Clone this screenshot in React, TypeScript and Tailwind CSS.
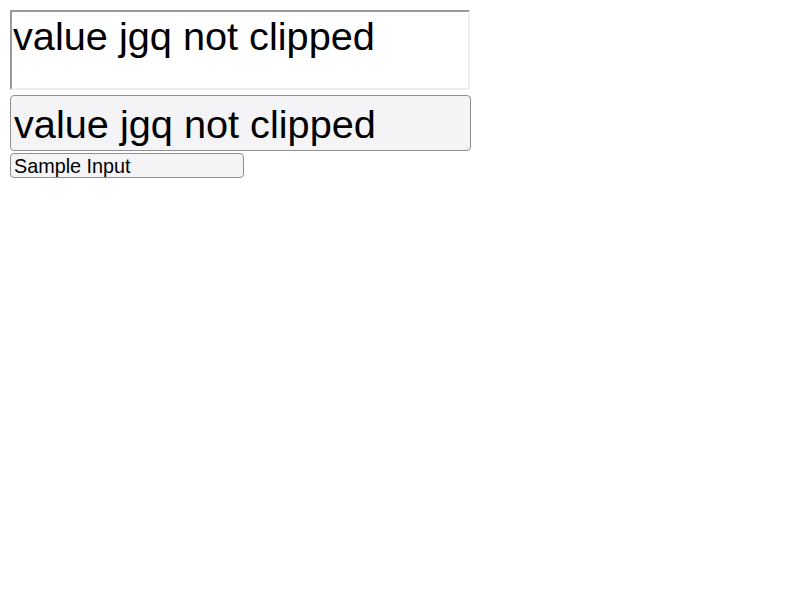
export default function App() {
  return (
    <div className="p-[10px] flex flex-col items-start font-['Liberation_Sans',Arial,sans-serif] text-black">
      <textarea
        readOnly
        defaultValue="value jgq not clipped"
        className="w-[460px] h-[80px] resize-none border-2 border-t-[#9a9a9a] border-l-[#9a9a9a] border-b-[#eeeeee] border-r-[#eeeeee] bg-white px-[1px] pt-[1px] pb-0 text-[39.7px] leading-[46px] outline-none overflow-hidden"
      />
      <input
        readOnly
        defaultValue="value jgq not clipped"
        className="mt-[5px] w-[461px] h-[56px] rounded-[4px] border border-[#8f8f8f] bg-[#f4f4f6] pl-[3px] pr-[2px] pt-[3px] pb-0 text-[39.7px] leading-[46px] outline-none"
      />
      <input
        readOnly
        defaultValue="Sample Input"
        className="mt-[2px] w-[234px] h-[25px] rounded-[4px] border border-[#8f8f8f] bg-[#f4f4f6] pl-[3px] pr-[2px] pt-[1px] pb-0 text-[19.8px] leading-[23px] outline-none"
      />
    </div>
  );
}
